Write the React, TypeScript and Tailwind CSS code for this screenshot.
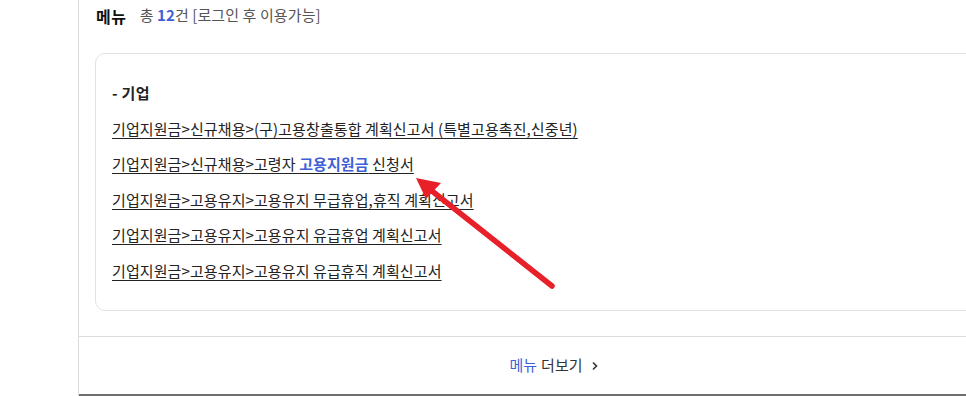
import React from "react";

const links: React.ReactNode[] = [
  <>기업지원금&gt;신규채용&gt;(구)고용창출통합 계획신고서 (특별고용촉진,신중년)</>,
  <>
    기업지원금&gt;신규채용&gt;고령자 <b className="font-bold text-[#3f5fd6]">고용지원금</b> 신청서
  </>,
  <>기업지원금&gt;고용유지&gt;고용유지 무급휴업,휴직 계획신고서</>,
  <>기업지원금&gt;고용유지&gt;고용유지 유급휴업 계획신고서</>,
  <>기업지원금&gt;고용유지&gt;고용유지 유급휴직 계획신고서</>,
];

export default function App() {
  return (
    <div
      className="relative w-[966px] h-[396px] overflow-hidden bg-white flex"
      style={{ fontFamily: '"Noto Sans CJK KR", "Noto Sans", sans-serif' }}
    >
      <div className="w-[78px] shrink-0" />
      <div className="w-[953px] shrink-0 h-[396px] border-l border-[#dcdcdc] flex flex-col">
        <div className="h-[33px] pl-[17px] flex items-center gap-[13px] text-[15px] pb-[2px]">
          <span className="font-bold text-[16px] tracking-[0.6px] text-[#111]">메뉴</span>
          <span className="text-[#555] tracking-[0.1px]">
            총 <b className="font-bold text-[#3f5fd6]">12</b>건 [로그인 후 이용가능]
          </span>
        </div>
        <div className="mt-[20px] ml-[16px] mr-[16px] h-[258px] border border-[#e2e2e2] rounded-[10px] pl-[16px] pt-[27px] flex flex-col">
          <div className="h-[25px] flex items-center font-bold text-[15px] tracking-[0.3px] text-[#222]">- 기업</div>
          <div className="flex flex-col">
            {links.map((l, i) => (
              <div key={i} className="h-[35.6px] flex items-center pt-[10px] text-[15px] tracking-[0.1px] text-[#222]">
                <span className="underline underline-offset-[3px] decoration-[#222]">{l}</span>
              </div>
            ))}
          </div>
        </div>
        <div className="mt-[25px] border-t border-[#dcdcdc] flex-1 flex items-center justify-center border-b-2 border-b-[#6f6f6f] text-[15px]">
          <span className="text-[#3f5fd6]">메뉴</span>
          <span className="ml-[4px] text-[#333]">더보기</span>
          <svg width="12" height="12" viewBox="0 0 12 12" className="ml-[6px] mt-[1px]">
            <path d="M4 2.5 L7.5 6 L4 9.5" fill="none" stroke="#333" strokeWidth="1.6" />
          </svg>
        </div>
      </div>
      <svg className="absolute left-0 top-0 pointer-events-none" width="966" height="396">
        <line x1="552" y1="286" x2="432" y2="191" stroke="#e8202a" strokeWidth="5.5" strokeLinecap="round" />
        <polygon points="416,178 441,183 426,199" fill="#e8202a" />
      </svg>
    </div>
  );
}
